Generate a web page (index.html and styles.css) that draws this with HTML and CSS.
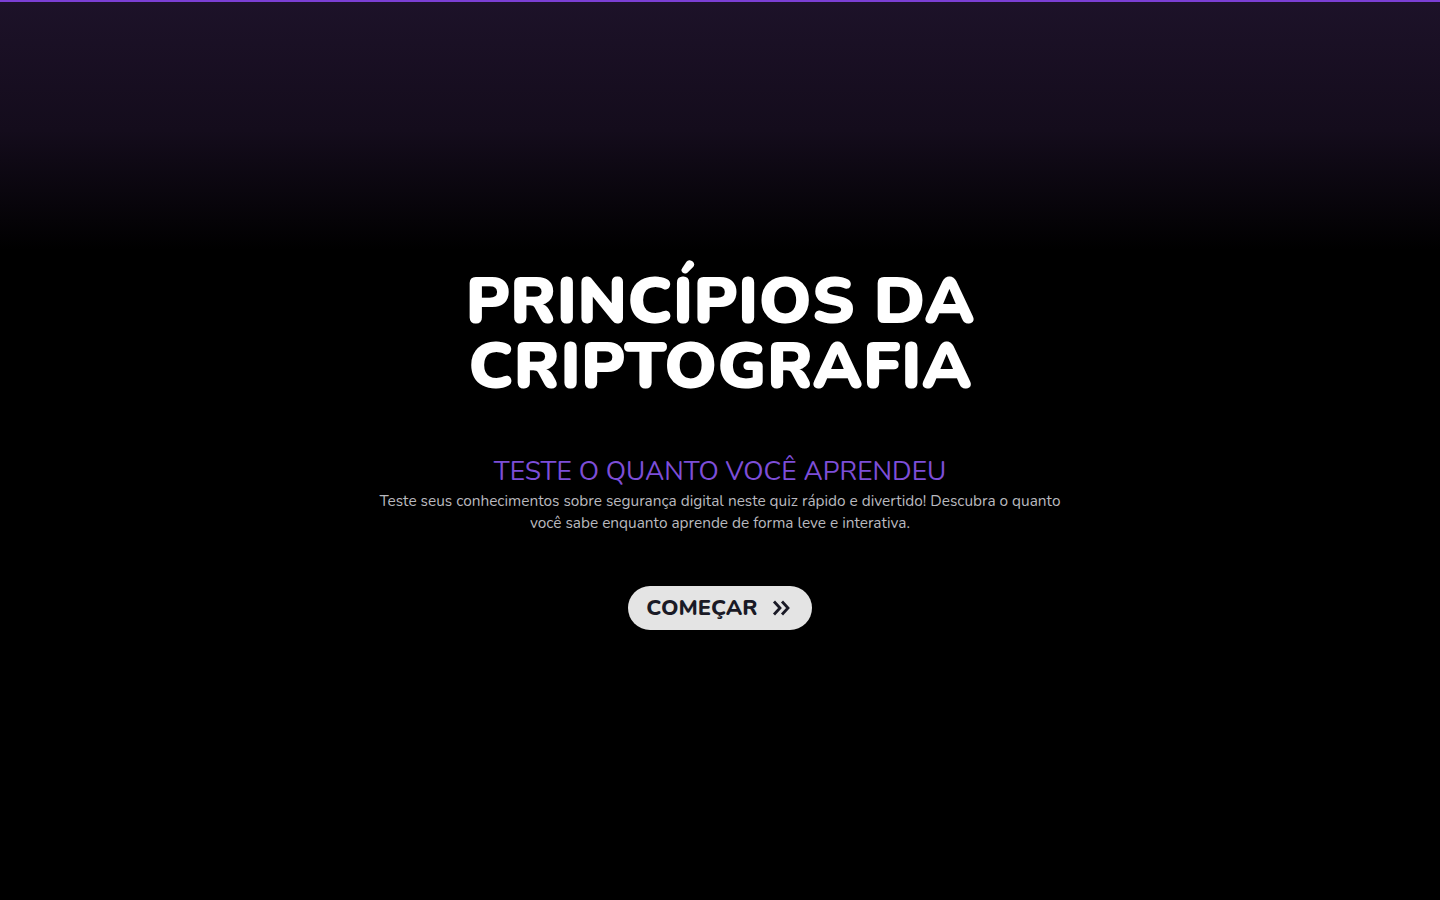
FILE: index.html
```html
<!DOCTYPE html>
<html lang="pt-BR">
<head>
<meta charset="utf-8">
<title>Princípios da Criptografia</title>
<link rel="stylesheet" href="styles.css">
</head>
<body>
<main class="hero">
  <h1 class="title">PRINCÍPIOS DA<br>CRIPTOGRAFIA</h1>
  <h2 class="subtitle">TESTE O QUANTO VOCÊ APRENDEU</h2>
  <p class="lead">Teste seus conhecimentos sobre segurança digital neste quiz rápido e divertido! Descubra o quanto você sabe enquanto aprende de forma leve e interativa.</p>
  <button class="start">COMEÇAR
    <svg class="chev" width="20" height="18" viewBox="0 0 20 18" fill="none" stroke="currentColor" stroke-width="2.8" stroke-linecap="butt" stroke-linejoin="miter"><path d="M3 2.5l6 6.5-6 6.5M11 2.5l6 6.5-6 6.5"/></svg>
  </button>
</main>
</body>
</html>
```
FILE: styles.css
```css
html, body {
  margin: 0;
  padding: 0;
  height: 100%;
}
body {
  background: linear-gradient(180deg, #1d1229 0px, #140c1c 130px, #000 250px, #000 100%);
  border-top: 2px solid #7b3fd4;
  box-sizing: border-box;
  font-family: "Nunito", "Lato", "Open Sans", sans-serif;
  color: #fff;
}
.hero {
  min-height: 898px;
  display: flex;
  flex-direction: column;
  align-items: center;
  justify-content: center;
  text-align: center;
  padding-bottom: 4px;
  box-sizing: border-box;
}
.title {
  margin: 0;
  font-size: 66px;
  line-height: 65px;
  font-weight: 900;
  color: #fff;
}
.subtitle {
  margin: 56px 0 0;
  font-size: 26.4px;
  line-height: 32px;
  font-weight: 400;
  color: #7d4ed8;
}
.lead {
  margin: 3px 0 0;
  max-width: 700px;
  font-size: 15.4px;
  line-height: 22px;
  color: #b9b9bf;
}
.start {
  margin-top: 52px;
  display: inline-flex;
  align-items: center;
  gap: 13px;
  height: 44px;
  padding: 0 21px 0 18px;
  border: none;
  border-radius: 22px;
  background: #e4e4e4;
  color: #1a1a26;
  font-family: inherit;
  font-size: 22px;
  font-weight: 800;
  cursor: pointer;
}
.chev {
  display: block;
}
```
